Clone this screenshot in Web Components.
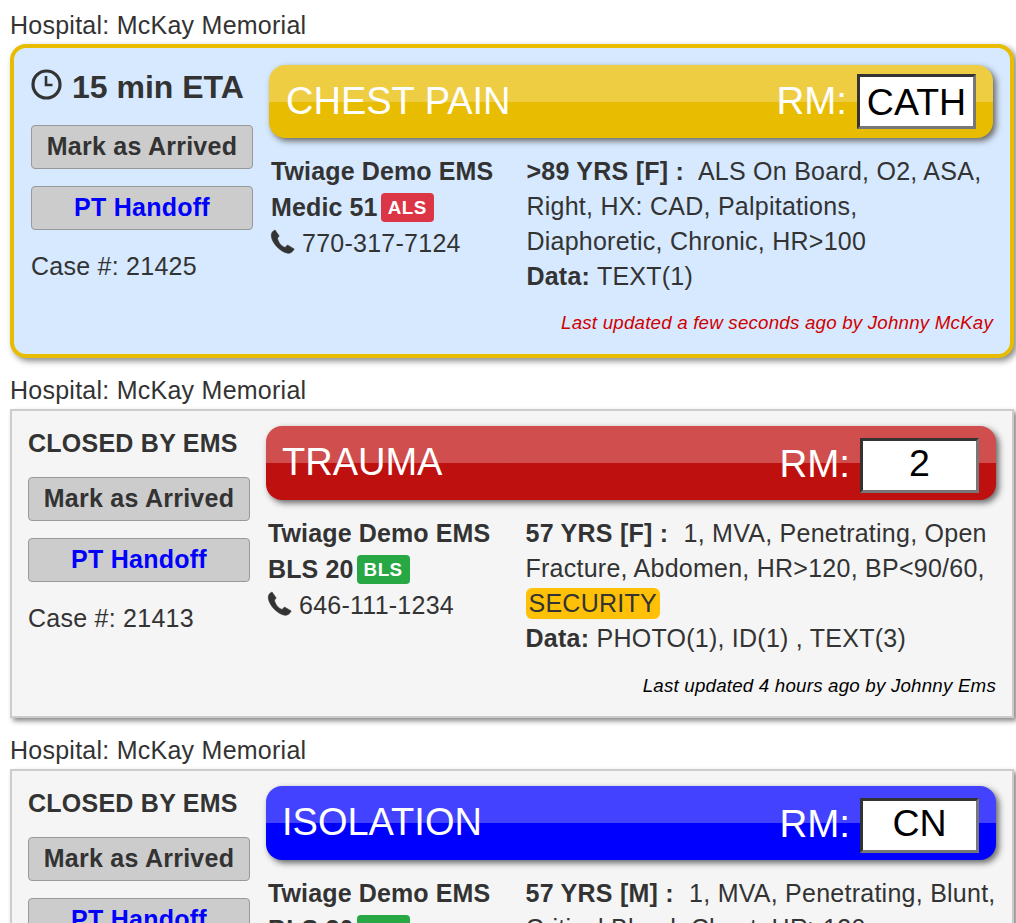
<!DOCTYPE html>
<html>
<head>
<meta charset="utf-8">
<style>
  html, body { margin: 0; overflow: hidden; height: 923px; background: #fff; }
  body { padding: 8px 2px 0 10px; font-family: "Liberation Sans", Arial, sans-serif; color: #333; font-size: 25px; line-height: 1.4; letter-spacing: .25px; }
</style>
</head>
<body>

<case-card hospital="McKay Memorial" tone="active" label="CHEST PAIN" color="#e8bc00" room="CATH" case-no="21425" updated="Last updated a few seconds ago by Johnny McKay">
  <eta-clock slot="status">15 min ETA</eta-clock>
  <span slot="agency">Twiage Demo EMS</span>
  <span slot="unit">Medic 51 <level-badge color="#dc3545">ALS</level-badge></span>
  <span slot="phone">770-317-7124</span>
  <span slot="patient">&gt;89 YRS [F] :</span>
  <span slot="notes">ALS On Board, O2, ASA, Right, HX: CAD, Palpitations, Diaphoretic, Chronic, HR&gt;100</span>
  <span slot="data">TEXT(1)</span>
</case-card>

<case-card hospital="McKay Memorial" label="TRAUMA" color="#bf1010" room="2" case-no="21413" updated="Last updated 4 hours ago by Johnny Ems">
  <b slot="status" class="closed">CLOSED BY EMS</b>
  <span slot="agency">Twiage Demo EMS</span>
  <span slot="unit">BLS 20 <level-badge color="#28a745">BLS</level-badge></span>
  <span slot="phone">646-111-1234</span>
  <span slot="patient">57 YRS [F] :</span>
  <span slot="notes">1, MVA, Penetrating, Open Fracture, Abdomen, HR&gt;120, BP&lt;90/60, <alert-tag>SECURITY</alert-tag></span>
  <span slot="data">PHOTO(1), ID(1) , TEXT(3)</span>
</case-card>

<case-card hospital="McKay Memorial" label="ISOLATION" color="#0000ff" room="CN" case-no="21409" updated="Last updated 5 hours ago by Johnny Ems">
  <b slot="status" class="closed">CLOSED BY EMS</b>
  <span slot="agency">Twiage Demo EMS</span>
  <span slot="unit">BLS 20 <level-badge color="#28a745">BLS</level-badge></span>
  <span slot="phone">646-111-1234</span>
  <span slot="patient">57 YRS [M] :</span>
  <span slot="notes">1, MVA, Penetrating, Blunt, Critical Blood, Chest, HR&gt;120</span>
  <span slot="data">TEXT(1)</span>
</case-card>

<script>
const cardTemplate = document.createElement("template");
cardTemplate.innerHTML = `
  <style>
    :host { display: block; }
    .hospital { line-height: 34px; height: 36px; }
    .card { box-sizing: border-box; display: flex; gap: 16px; background: #f5f5f5; border: 2px solid #ccc; padding: 15px 16px 0; height: 309px; margin-bottom: 15px; box-shadow: 3px 3px 5px #888; }
    :host([tone="active"]) .card { background: #d6e9ff; border: 4px solid #e8bc00; border-radius: 16px; padding: 17px 17px 0; height: 314px; box-shadow: 3px 3px 6px #888; }
    .side { width: 222px; flex: none; }
    .status { height: 60px; }
    :host(:not([tone="active"])) .status { height: 51px; }
    .case { margin-top: 19px; }
    .main { flex: 1; min-width: 0; display: flex; flex-direction: column; }
    .info { display: grid; grid-template-columns: 35.55% 1fr; margin-top: 16px; }
    .left { font-weight: bold; margin-top: -1px; padding-left: 2px; line-height: 36px; letter-spacing: .13px; }
    .left div { white-space: nowrap; }
    .phone { font-weight: normal; letter-spacing: .25px; display: flex; align-items: center; gap: 7px; margin-left: -1px; }
    .phone svg { width: 25px; height: 25px; fill: #333; stroke: #333; stroke-width: .6; stroke-linejoin: round; flex: none; margin-top: -4px; }
    .gap { margin-right: 8px; }
    .updated { margin-top: 18px; text-align: right; font-size: 18.75px; font-style: italic; line-height: 24px; letter-spacing: .19px; color: #000; }
    :host([tone="active"]) .updated { margin-top: 17px; color: #d00000; }
  </style>
  <div class="hospital"></div>
  <div class="card">
    <div class="side">
      <div class="status"><slot name="status"></slot></div>
      <action-button>Mark as Arrived</action-button>
      <action-button link>PT Handoff</action-button>
      <div class="case"></div>
    </div>
    <div class="main">
      <case-banner></case-banner>
      <div class="info">
        <div class="left">
          <div><slot name="agency"></slot></div>
          <div><slot name="unit"></slot></div>
          <div class="phone">
            <svg viewBox="0 0 25 25"><path d="M5 1L9.200 7 7.500 9C8 13 11 17 15 18.500L17.500 16 24.200 20C22.800 23 20 24.600 18 24.300 10 23 2 14 1.300 7 1.100 4.300 2.500 2 5 1Z"/></svg>
            <slot name="phone"></slot>
          </div>
        </div>
        <div class="right">
          <div><b class="gap"><slot name="patient"></slot></b> <slot name="notes"></slot></div>
          <div><b>Data:</b> <slot name="data"></slot></div>
        </div>
      </div>
      <div class="updated"></div>
    </div>
  </div>
`;

class CaseCard extends HTMLElement {
  constructor() {
    super();
    this.attachShadow({ mode: "open" });
  }

  connectedCallback() {
    this.shadowRoot.appendChild(cardTemplate.content.cloneNode(true));
    this.shadowRoot.querySelector(".hospital").textContent = `Hospital: ${this.getAttribute("hospital")}`;
    this.shadowRoot.querySelector(".case").textContent = `Case #: ${this.getAttribute("case-no")}`;
    this.shadowRoot.querySelector(".updated").textContent = this.getAttribute("updated");
    const banner = this.shadowRoot.querySelector("case-banner");
    banner.setAttribute("label", this.getAttribute("label"));
    banner.setAttribute("room", this.getAttribute("room"));
    banner.style.setProperty("--banner", this.getAttribute("color"));
    if (this.getAttribute("tone") !== "active") banner.setAttribute("low", "");
    const status = this.querySelector(".closed");
    if (status) status.style.lineHeight = "34px";
  }
}

const bannerTemplate = document.createElement("template");
bannerTemplate.innerHTML = `
  <style>
    :host { display: flex; align-items: center; justify-content: space-between; box-sizing: border-box; height: 73px; padding: 0 17px; color: #fff; border-radius: 16px; font-size: 38.5px; line-height: 1; letter-spacing: 0;
      background: linear-gradient(to bottom, rgba(255,255,255,.26) 37px, transparent 37px), var(--banner);
      box-shadow: 3px 3px 6px #666; }
    :host([low]) { height: 74px; padding-left: 16px; }
    .label { margin-top: -2px; font-size: 38px; }
    .room { display: flex; align-items: center; gap: 10px; }
    :host([low]) .room { margin-top: 5px; }
    :host([low]) .rm { margin-top: -2px; }
    .value { box-sizing: border-box; width: 119px; height: 55px; color: #000; background: #fff; text-align: center; font-size: 37.5px; line-height: 50px; border: 3px solid; border-color: #333 #777 #777 #333; }
    :host([low]) .value { line-height: 45px; }
  </style>
  <span class="label"></span>
  <span class="room"><span class="rm">RM:</span> <span class="value"></span></span>
`;

class CaseBanner extends HTMLElement {
  constructor() {
    super();
    this.attachShadow({ mode: "open" });
    this.shadowRoot.appendChild(bannerTemplate.content.cloneNode(true));
  }

  static get observedAttributes() { return ["label", "room"]; }

  attributeChangedCallback(name, oldValue, value) {
    this.shadowRoot.querySelector(name === "label" ? ".label" : ".value").textContent = value;
  }
}

const buttonTemplate = document.createElement("template");
buttonTemplate.innerHTML = `
  <style>
    :host { display: block; box-sizing: border-box; height: 44px; margin-bottom: 17px; background: #ccc; border: 1px solid #999; border-radius: 4px; text-align: center; font-weight: bold; line-height: 41px; color: #333; }
    :host([link]) { color: #0000ff; margin-bottom: 0; }
  </style>
  <slot></slot>
`;

class ActionButton extends HTMLElement {
  constructor() {
    super();
    this.attachShadow({ mode: "open" });
    this.shadowRoot.appendChild(buttonTemplate.content.cloneNode(true));
  }
}

const clockTemplate = document.createElement("template");
clockTemplate.innerHTML = `
  <style>
    :host { display: flex; align-items: center; gap: 10px; padding-top: 5px; font-weight: bold; font-size: 32px; line-height: 34px; letter-spacing: 0; }
    svg { width: 31px; height: 31px; flex: none; margin-top: -6px; }
  </style>
  <svg viewBox="0 0 31 31" fill="none" stroke="#333"><circle cx="15.500" cy="15.500" r="13.500" stroke-width="3.200"/><path d="M15 7v9h6.500" stroke-width="2.600"/></svg>
  <span><slot></slot></span>
`;

class EtaClock extends HTMLElement {
  constructor() {
    super();
    this.attachShadow({ mode: "open" });
    this.shadowRoot.appendChild(clockTemplate.content.cloneNode(true));
  }
}

const badgeTemplate = document.createElement("template");
badgeTemplate.innerHTML = `
  <style>
    :host { display: inline-block; margin-left: -4px; padding: 0 7px; color: #fff; font-size: 18.750px; font-weight: bold; letter-spacing: .5px; line-height: 29px; height: 29px; border-radius: 4px; vertical-align: 2px; background: var(--badge); }
  </style>
  <slot></slot>
`;

class LevelBadge extends HTMLElement {
  constructor() {
    super();
    this.attachShadow({ mode: "open" });
    this.shadowRoot.appendChild(badgeTemplate.content.cloneNode(true));
    this.style.setProperty("--badge", this.getAttribute("color"));
  }
}

const alertTemplate = document.createElement("template");
alertTemplate.innerHTML = `
  <style>
    :host { display: inline-block; padding: 0 3px; background: #ffc107; border-radius: 6px; line-height: 31px; color: #333; }
  </style>
  <slot></slot>
`;

class AlertTag extends HTMLElement {
  constructor() {
    super();
    this.attachShadow({ mode: "open" });
    this.shadowRoot.appendChild(alertTemplate.content.cloneNode(true));
  }
}

customElements.define("case-banner", CaseBanner);
customElements.define("action-button", ActionButton);
customElements.define("eta-clock", EtaClock);
customElements.define("level-badge", LevelBadge);
customElements.define("alert-tag", AlertTag);
customElements.define("case-card", CaseCard);
</script>
</body>
</html>
